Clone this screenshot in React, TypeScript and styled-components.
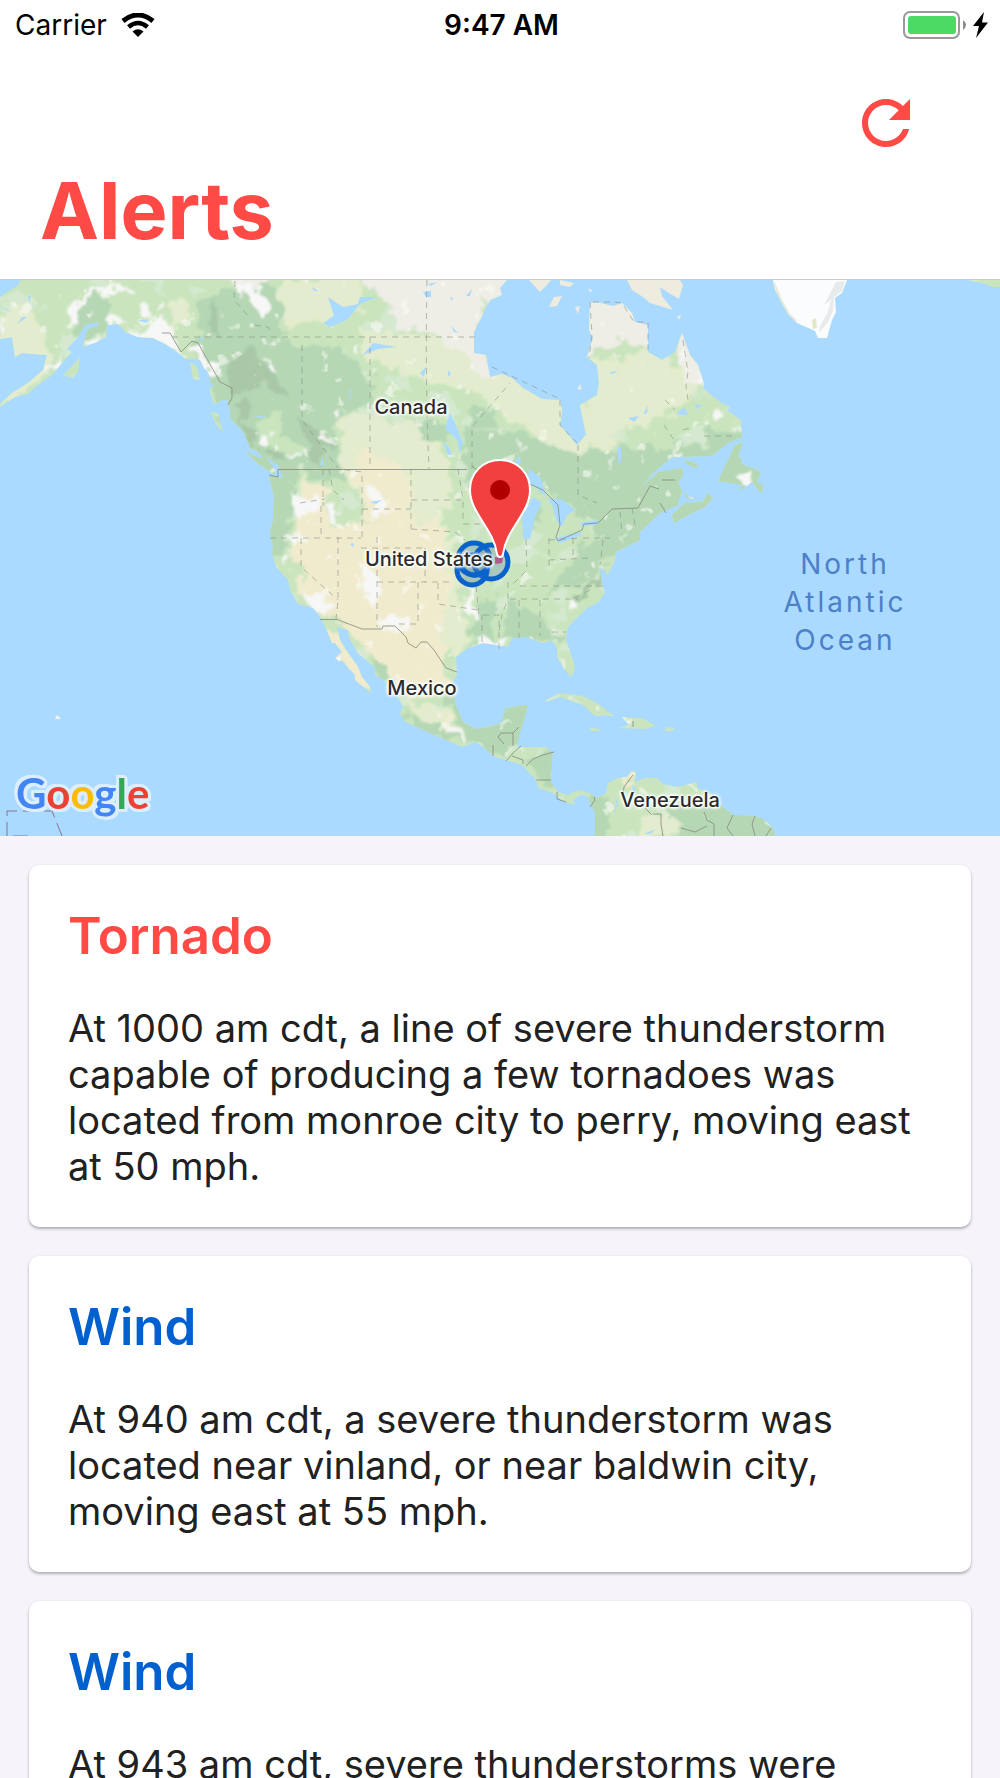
import React from "react";
import styled, { createGlobalStyle } from "styled-components";

const red = "#ff4a45";
const blue = "#0060cf";
const water = "#aadaff";

const GlobalStyle = createGlobalStyle`
  *, *::before, *::after { box-sizing: border-box; }
  body {
    margin: 0;
    background: #f6f4fa;
    font-family: Inter, "Liberation Sans", sans-serif;
    color: #212121;
  }
`;

const Screen = styled.div`
  display: flex;
  flex-direction: column;
  height: 100vh;
  overflow: hidden;
`;

const Header = styled.header`
  flex: none;
  background: #fff;
  border-bottom: 1px solid #c9cccf;
`;

const StatusBar = styled.div`
  display: grid;
  grid-template-columns: 1fr auto 1fr;
  align-items: center;
  height: 50px;
  padding: 0 12px 0 15px;
  color: #000;
  font-size: 28px;
  line-height: 34px;
`;

const StatusGroup = styled.div<{ $end?: boolean }>`
  display: flex;
  align-items: center;
  justify-content: ${(p) => (p.$end ? "flex-end" : "flex-start")};
  gap: ${(p) => (p.$end ? "6px" : "14px")};
`;

const Clock = styled.time`
  font-weight: 600;
`;

const Toolbar = styled.div`
  display: flex;
  justify-content: flex-end;
  height: 110px;
  padding: 37px 78px 0 0;
`;

const IconButton = styled.button`
  width: 72px;
  height: 72px;
  padding: 0;
  border: 0;
  background: none;
  color: ${red};
  cursor: pointer;

  svg { display: block; }
`;

const PageTitle = styled.h1`
  margin: 0;
  padding: 0 40px 19px;
  color: ${red};
  font-size: 79px;
  font-weight: 700;
  line-height: 100px;
`;

const MapFrame = styled.section`
  position: relative;
  flex: none;
  aspect-ratio: 1000 / 556;
  overflow: hidden;
  background: ${water};

  > svg {
    display: block;
    width: 100%;
    height: 100%;
  }
`;

const PlaceLabel = styled.span<{ $x: number; $y: number }>`
  position: absolute;
  left: ${(p) => p.$x}%;
  top: ${(p) => p.$y}%;
  transform: translate(-50%, -50%);
  color: #2b2b2b;
  font-size: 20px;
  font-weight: 500;
  line-height: 24px;
  white-space: nowrap;
  text-shadow: 0 0 3px #fff, 0 0 3px #fff, 0 0 4px #fff, 0 0 5px #fff, 1px 1px 2px #fff, -1px -1px 2px #fff;
`;

const OceanLabel = styled.span`
  position: absolute;
  left: 84.5%;
  top: 58%;
  width: min-content;
  transform: translate(-50%, -50%);
  color: #4c80c9;
  font-size: 28px;
  letter-spacing: 3px;
  line-height: 38px;
  text-align: center;
`;

const Wordmark = styled.span`
  position: absolute;
  left: 16px;
  bottom: 18px;
  font-family: Lato, sans-serif;
  font-size: 42px;
  font-weight: 700;
  line-height: 50px;
  filter: drop-shadow(2px 0 0 #dceefc) drop-shadow(-2px 0 0 #dceefc)
    drop-shadow(0 2px 0 #dceefc) drop-shadow(0 -2px 0 #dceefc)
    drop-shadow(1px 1px 0 #dceefc) drop-shadow(-1px -1px 0 #dceefc);
`;

const Letter = styled.span<{ $color: string }>`
  color: ${(p) => p.$color};
`;

const AlertList = styled.main`
  flex: 1;
  min-height: 0;
  display: flex;
  flex-direction: column;
  gap: 29px;
  padding: 29px;
  overflow-y: auto;
  scrollbar-width: none;
`;

const Card = styled.article`
  flex: none;
  padding: 40px 39px 38px;
  border-radius: 10px;
  background: #fff;
  box-shadow: 0 2px 3px rgba(0, 0, 0, 0.28), 0 0 2px rgba(0, 0, 0, 0.08);
`;

const CardTitle = styled.h2<{ $color: string }>`
  margin: 0 0 38px;
  color: ${(p) => p.$color};
  font-size: 51px;
  font-weight: 600;
  line-height: 62px;
`;

const CardText = styled.p`
  margin: 0;
  font-size: 38px;
  line-height: 46px;
`;

const WifiIcon = () => (
  <svg width="34" height="24" viewBox="0 0 34 24" aria-label="Wi-Fi">
    <path d="M2 8Q17-4 32 8" fill="none" stroke="#000" strokeWidth="5" />
    <path d="M7.500 14Q17 6 26.500 14" fill="none" stroke="#000" strokeWidth="4.500" />
    <path d="M11.500 18.500Q17 14 22.500 18.500L17 24Z" />
  </svg>
);

const BatteryIcon = () => (
  <svg width="64" height="28" viewBox="0 0 64 28" aria-label="Battery charging">
    <rect x="1" y="1" width="55" height="26" rx="6" fill="#fff" stroke="#999" strokeWidth="2" />
    <rect x="5" y="5" width="48" height="18" rx="3" fill="#4cd964" />
    <path d="M60 9Q66 14 60 19Z" fill="#8c8c8c" />
  </svg>
);

const BoltIcon = () => (
  <svg width="15" height="26" viewBox="0 0 15 26" aria-hidden="true">
    <path d="M11 0L0 14H6L3 26L15 10.500H9Z" />
  </svg>
);

const RefreshIcon = () => (
  <svg width="72" height="72" viewBox="0 0 24 24" fill="currentColor" aria-hidden="true">
    <path d="M17.65 6.35C16.2 4.9 14.21 4 12 4c-4.42 0-7.99 3.58-7.99 8s3.57 8 7.99 8c3.73 0 6.84-2.55 7.73-6h-2.08c-.82 2.33-3.04 4-5.65 4-3.31 0-6-2.69-6-6s2.69-6 6-6c1.66 0 3.14.69 4.22 1.78L13 11h7V4l-2.35 2.35z" />
  </svg>
);

const mainland =
  "21,280 507,280 500,288 502,295 490,300 474,332 474,353 486,355 490,377 502,374 512,378 523,388 542,399 560,400 562,410 560,425 577,445 586,435 580,405 597,395 599,383 597,365 587,357 593,338 589,330 590,303 596,302 613,306 622,303 632,313 635,322 648,325 648,352 662,360 675,352 682,333 690,355 698,365 704,384 703,388 720,402 730,407 727,410 741,420 742,437 728,443 712,456 672,457 653,473 640,488 658,472 682,468 683,475 678,483 682,490 678,505 660,513 640,532 640,540 616,552 615,560 608,575 600,567 602,585 605,592 599,602 587,608 568,627 566,640 573,660 575,667 572,677 566,672 557,657 557,648 552,641 542,643 527,637 512,638 508,647 483,643 468,648 456,657 457,675 453,682 454,693 455,703 463,722 476,729 487,727 502,723 505,709 517,706 528,705 525,717 520,733 517,747 545,747 553,753 552,760 551,782 558,792 568,795 578,790 590,793 597,798 606,793 608,783 617,778 627,777 632,771 636,773 635,782 645,778 657,778 663,784 677,787 697,782 697,788 710,793 723,807 733,815 755,816 763,819 773,828 775,836 595,836 595,812 592,807 587,796 580,795 573,800 575,805 563,801 553,793 538,788 536,780 522,765 495,757 483,747 476,742 462,747 430,733 405,722 400,713 403,707 398,697 387,682 375,675 375,668 358,653 349,638 348,630 337,627 340,640 348,653 358,667 362,677 370,687 371,693 355,680 355,675 343,662 336,657 342,652 335,643 332,643 328,633 320,617 313,608 298,604 290,590 288,580 276,567 272,553 273,547 270,532 273,520 274,497 269,475 283,478 278,465 264,458 256,450 250,448 248,442 242,430 230,418 230,410 227,400 217,400 212,385 205,370 200,360 186,359 177,352 167,345 153,338 138,337 125,332 118,324 107,325 106,337 97,342 83,347 84,342 87,330 100,324 97,322 85,325 78,337 67,349 72,352 63,362 52,375 38,385 28,394 15,397 0,407 0,404 12,393 28,383 43,370 47,355 22,353 15,357 12,337 0,339 0,297 18,285";

const islands = [
  "743,442 735,445 728,460 718,481 742,485 740,491 752,482 761,493 764,486 757,482 761,472 740,463 743,459 738,457",
  "672,515 674,523 692,513 705,507 713,498 707,493 703,502 685,503",
  "683,460 692,462 699,466 696,468 689,465",
  "683,492 690,497 697,497 695,499 687,498",
  "546,700 560,693 583,696 597,703 614,716 595,716 583,705 560,697 546,702",
  "622,717 642,718 656,726 645,729 619,728 629,725",
  "589,728 597,728 601,731 592,731",
  "665,727 675,728 672,731 665,731",
  "80,357 70,368 63,375 72,378 78,372",
  "211,412 219,414 220,422 224,433 215,423",
  "190,362 197,366 200,380 193,379",
  "209,388 215,387 222,400 214,405",
  "245,451 257,457 267,458 278,470 273,474 257,463",
  "968,280 1000,280 1000,287 993,287 985,284",
];

const arctic = [
  "627,280 680,280 683,285 679,299 672,295 660,287 662,296 673,310 650,303 643,297 632,290",
  "529,280 551,280 547,285 540,292",
  "560,280 574,283 570,287 560,285",
  "549,307 554,297 562,296 557,306",
  "575,307 580,306 578,314",
  "588,288 592,290 591,293",
  "577,389 581,384 581,390",
  "677,316 681,315 679,320",
];

const lakes = [
  "529,469 540,477 544,488 546,497 536,487 528,484",
  "515,460 520,457 521,463 517,466",
  "533,497 542,503 535,517 530,539 523,539 522,517",
  "547,498 563,500 575,510 567,515 562,527 556,520 552,505",
  "555,538 580,532 582,535 560,543",
  "582,522 598,520 597,525 580,526",
  "450,413 455,423 463,443 460,453 457,440 445,428",
  "443,442 449,447 452,455 448,455",
  "328,297 343,307 358,304 360,297 377,297 360,304 347,320 330,327 323,323 334,316",
  "363,355 373,343 397,347 378,349",
  "420,373 426,367 424,377",
  "448,370 451,374 448,377",
  "350,390 352,389 349,402",
  "466,296 472,289 470,296",
  "451,326 458,333 454,332",
  "423,292 431,291 431,297 426,297",
  "428,284 437,282 431,286",
  "450,297 453,298 452,301",
  "609,373 618,370 613,374",
  "628,418 639,416 634,422",
  "643,414 648,406 647,413",
  "618,447 621,446 621,463 618,460",
  "676,414 684,407 688,415",
  "695,404 702,406 696,409",
  "266,457 276,464 283,478 278,474 272,465",
  "253,416 266,416 262,418",
  "0,306 14,313 4,309",
  "17,324 22,317 27,317",
  "28,296 31,296 29,304",
  "138,320 149,320 145,323",
  "312,287 319,291 314,291",
  "320,465 322,458 324,465",
  "370,502 382,500 376,504",
  "350,544 353,543 354,548",
  "200,338 204,337 202,342",
  "201,366 207,371 211,379 206,377",
  "210,386 216,383 208,390",
  "632,784 636,789 634,793",
  "614,815 617,798 618,803",
  "644,834 656,829 650,834",
];

const zones: { fill: string; areas: string[] }[] = [
  {
    fill: "#e3ecce",
    areas: [
      "0,315 30,300 45,345 50,375 20,395 0,407",
      "282,280 360,280 365,310 330,318 300,330 282,320",
      "170,300 186,300 188,322 175,328",
      "360,330 480,340 520,378 590,410 620,445 560,450 520,425 480,395 440,383 400,372 365,360",
      "590,360 650,352 690,370 700,395 650,425 600,435 585,410",
      "340,412 395,418 430,425 450,465 458,560 460,650 430,650 410,560 340,470",
      "435,600 465,600 470,645 455,660 440,640",
      "400,700 450,710 460,735 430,725",
      "640,820 700,805 715,836 640,836",
    ],
  },
  {
    fill: "#eeede6",
    areas: [
      "345,270 520,270 505,300 480,300 485,360 504,382 478,374 462,348 440,338 415,328 395,330 380,295",
      "440,310 470,305 470,330 445,330",
      "575,290 650,300 665,358 625,342 600,350 580,362",
      "682,320 712,386 682,382 678,350",
      "232,270 268,270 270,318 255,320 240,300",
    ],
  },
  {
    fill: "#f1ebce",
    areas: [
      "305,472 325,490 330,530 360,520 410,530 410,470 370,450 360,448 350,475 365,500 345,550 300,555 292,530",
      "292,530 440,520 455,590 440,620 445,670 455,690 410,700 380,665 350,630 318,610 290,580",
      "327,630 340,630 385,700 360,690 330,650",
      "440,715 450,718 455,730 445,725",
      "620,775 635,773 628,790",
    ],
  },
  {
    fill: "#b5d7b4",
    areas: [
      "200,300 225,290 280,285 284,335 330,345 368,372 375,405 345,412 330,435 345,478 325,480 305,468 285,465 230,470 215,395 195,365 196,335",
      "255,462 300,465 292,500 283,560 258,545",
      "80,300 105,295 108,330 78,342",
      "465,430 520,432 560,450 640,448 745,440 720,495 660,525 620,530 570,510 530,480 480,500 465,480",
      "415,420 440,418 448,440 425,440",
      "470,405 490,410 500,425 470,430",
      "600,520 640,510 650,540 610,555 590,580 550,595 540,600 575,560",
      "470,630 482,600 495,598 490,640 475,645",
      "500,640 515,600 540,620 565,640 530,640",
      "515,515 530,500 545,520 530,530",
      "370,650 385,665 400,690 380,680",
      "440,690 455,690 470,720 500,722 500,700 540,695 530,745 500,752 470,740",
      "402,712 440,725 470,740 430,740",
      "530,755 555,750 552,785 535,775",
      "590,800 610,795 605,840 585,840",
      "660,800 790,810 785,845 690,845",
      "705,430 780,430 780,510 705,488",
      "660,490 730,480 700,525 670,535",
      "545,760 560,780 545,790",
    ],
  },
  {
    fill: "#a9c8a8",
    areas: [
      "225,370 248,345 290,395 262,385 250,395 230,385",
      "235,400 247,398 245,425 262,455 245,445",
      "302,420 315,430 335,445 322,450 318,470 310,462",
      "268,450 285,448 280,465",
      "213,300 222,310 218,335 206,328",
      "570,600 610,565 600,585 575,605",
    ],
  },
  {
    fill: "#cae5be",
    areas: [
      "256,422 275,412 285,435 300,450 285,452 262,440",
      "283,325 330,320 340,338 300,350",
      "440,505 470,500 472,540 450,540",
      "278,567 300,575 308,582 300,560 280,545",
    ],
  },
  {
    fill: "#f6f7f6",
    areas: [
      "66,305 85,297 110,284 138,290 132,292 108,290 84,303 80,325 66,330",
      "105,322 118,312 126,320 108,328",
      "135,308 145,303 155,312 140,316",
      "125,327 150,332 150,317 175,325 178,345 188,360 170,350 140,338",
      "190,345 205,350 218,375 210,372 198,358",
      "85,340 105,335 98,343 84,347",
      "45,368 65,356 60,365 48,377",
      "0,320 6,322 5,334 0,335",
      "235,281 250,282 268,305 262,315 246,300",
      "258,434 266,436 264,446 258,443",
      "273,431 278,435 275,442",
      "292,500 300,484 298,495 322,500 320,508 300,520 292,515",
      "288,452 302,450 298,456 288,455",
      "264,355 276,368 280,374 270,370",
      "318,428 328,438 333,445 322,440",
      "330,503 340,510 338,525 330,520",
      "285,540 300,530 296,545",
      "282,555 288,552 290,565 284,562",
      "308,590 320,598 335,605 330,612 305,604",
      "370,485 385,500 390,512 372,515",
      "365,560 378,580 375,612 366,600",
      "380,620 412,618 410,630 385,628",
      "464,580 472,590 480,620 472,618 468,605",
      "476,640 510,640 505,650 480,648",
      "448,718 462,732 466,742 455,735",
      "476,740 490,752 482,749",
      "568,598 578,598 580,608 572,610",
      "557,655 565,665 563,672",
      "600,565 607,572 604,575",
      "697,370 703,384 696,384",
      "682,345 688,358 680,357",
      "712,412 725,410 722,418 714,418",
      "732,422 741,426 741,434",
      "672,449 680,449 680,453 672,453",
      "736,478 751,475 750,484 738,484",
      "620,718 628,718 626,726",
      "610,460 616,456 612,468",
      "520,440 525,444 520,447",
      "495,430 502,430 500,434",
      "333,412 340,409 338,420",
      "605,290 640,295 640,299",
      "520,748 523,758 517,754",
    ],
  },
];

const stateLines =
  "M172 337H475M370 337V469M427 280Q425 380 429 469M302 345V420L338 468M235 281L234 300 250 318M255 325L268 327 272 333" +
  "M475 280M472 469V427L510 383M492 367L560 399M578 445V495L597 503M704 436H735M683 340L688 372 686 386 688 400M665 400L675 410M664 425L674 440M683 430L690 428" +
  "M323 469L323 506M300 503L325 499M321 506V537M270 538H361M362 537V472L340 469M362 509H411M411 469V529M329 469L333 490 344 500M411 500H462M411 529L455 532 465 540M458 469L463 500 463 520M463 524H500" +
  "M301 538V567L338 600M338 537V600L336 619M377 537V627M361 548H425M377 582H450M418 582V624H395M438 583V604L478 610M425 548V582M476 586L479 615H499V650M482 642V615M508 582L508 598 502 615 498 636M519 600V638M540 600V636M510 599H578M520 586H605" +
  "M526 539L527 570 512 585M549 538V570M549 540L582 538M573 538V560M549 560L590 558M583 538H610M620 512L622 535M632 508L636 530M590 590L570 600M603 540L600 565M552 632H566" +
  "M590 302L592 335 589 358M593 302H613L622 303 634 322H648V350M560 400V425L577 443";

const reefLines = "M7 837V811H52L62 836M13 836H29";

const countryLines =
  "M162 333H170L181 352 192 341 198 343 220 382 232 388V398L228 405M269 475L278 477V469.500H467M472 466L484 475M530 484L543 490 558 505 560 525 556 537 558 541 582 530 584 524 598 523 612 509 638 508 650 486 659 489M660 503L666 513" +
  "M320 619.500H337L362 629H382L383 626H395L406 637 408 643 416 648 421 642H427L434 650 446 668 457 672" +
  "M493 745V756M519 727L513 733H501L498 737 504 744M513 733V746M506 761L514 752 521 746M512 756L523 760V764M526 766L533 759 543 755 554 752M536 780H551M557 792V799L566 802M594 797L595 800 590 807M633 775L624 787 622 798M645 808L652 815M653 814H661V824L663 836M704 812L707 820 714 824V836M681 828L695 832 707 826M733 815L727 828 733 836M755 816L752 824 755 836M771 828L766 836M633 721V727M675 480L662 480";

const MapArt = () => (
  <svg viewBox="0 280 1000 556" preserveAspectRatio="xMidYMid slice" aria-hidden="true">
    <defs>
      <clipPath id="land">
        <polygon points={mainland} />
        {islands.map((p) => (
          <polygon key={p} points={p} />
        ))}
      </clipPath>
      <filter id="rough" x="0" y="270" width="1000" height="576" filterUnits="userSpaceOnUse">
        <feTurbulence type="fractalNoise" baseFrequency="0.07" numOctaves="3" seed="8" />
        <feDisplacementMap in="SourceGraphic" scale="22" xChannelSelector="R" yChannelSelector="G" />
        <feGaussianBlur stdDeviation="0.9" />
      </filter>
      <filter id="patches" x="0" y="280" width="1000" height="556" filterUnits="userSpaceOnUse">
        <feTurbulence type="fractalNoise" baseFrequency="0.06" numOctaves="3" seed="21" />
        <feColorMatrix values="0 0 0 0 0.95  0 0 0 0 0.96  0 0 0 0 0.91  10 0 0 0 -6.9" />
      </filter>
      <filter id="woods" x="0" y="280" width="1000" height="556" filterUnits="userSpaceOnUse">
        <feTurbulence type="fractalNoise" baseFrequency="0.035" numOctaves="3" seed="4" />
        <feColorMatrix values="0 0 0 0 0.71  0 0 0 0 0.84  0 0 0 0 0.70  0 12 0 0 -7" />
      </filter>
    </defs>

    <rect y="280" width="1000" height="556" fill={water} />
    <g clipPath="url(#land)">
      <rect y="280" width="1000" height="556" fill="#cae5be" />
      <rect y="280" width="1000" height="556" filter="url(#woods)" opacity="0.6" />
      <g filter="url(#rough)">
        {zones.map((zone) => (
          <g key={zone.fill} fill={zone.fill}>
            {zone.areas.map((p) => (
              <polygon key={p} points={p} />
            ))}
          </g>
        ))}
      </g>
      <rect y="280" width="1000" height="556" filter="url(#patches)" opacity="0.6" />
    </g>
    <g fill="#eeebdf">
      {arctic.map((p) => (
        <polygon key={p} points={p} />
      ))}
    </g>
    <polygon
      fill="#fafcfd"
      points="773,280 775,290 788,313 797,323 815,331 818,338 827,338 832,320 836,312 835,298 842,293 847,280"
    />
    <path d="M774 283L781 300 789 314 796 321" fill="none" stroke="#e6ead8" strokeWidth="2" />
    <path d="M836 282L824 305 831 300 827 314 820 326 819 333 828 322 833 311 834 297 842 291 845 281Z" fill="#e8ebec" />
    <path d="M812 320L816 318 817 328 813 329Z" fill="#e3e8c8" />
    <path d="M335 658L341 656 340 662ZM55 719L57 715 61 719Z" fill="#f4f5f3" />
    <g fill={water}>
      {lakes.map((p) => (
        <polygon key={p} points={p} />
      ))}
    </g>
    <path d={stateLines} fill="none" stroke="#8c9087" strokeOpacity="0.6" strokeWidth="1" strokeDasharray="6 5" />
    <path d={reefLines} fill="none" stroke="#8a7488" strokeWidth="1" strokeDasharray="15 6" />
    <path d={countryLines} fill="none" stroke="#858a80" strokeOpacity="0.8" strokeWidth="1" />

    <g fill="rgba(80,125,165,0.3)" stroke="#0a62cc" strokeWidth="5">
      <circle cx="474" cy="559" r="16" />
      <circle cx="491" cy="562" r="17" />
      <circle cx="472" cy="570" r="15" />
      <path d="M461 567Q474 583 488 568" fill="none" />
    </g>
    <path d="M495 557L503 558 502 563 495 564Z" fill="#b05a8c" />
    <path
      d="M500 460C483 460 470 473 470 490C470 513 494 529 497 554C498 558 502 558 503 554C506 529 530 513 530 490C530 473 517 460 500 460Z"
      fill="#f23f40"
      stroke="#fff"
      strokeWidth="2"
    />
    <circle cx="500" cy="490" r="10" fill="#b10000" />
  </svg>
);

const places = [
  { name: "Canada", x: 41.1, y: 22.9 },
  { name: "United States", x: 42.9, y: 50.1 },
  { name: "Mexico", x: 42.2, y: 73.3 },
  { name: "Venezuela", x: 67, y: 93.6 },
];

const wordmark = [
  ["G", "#4285f4"],
  ["o", "#ea4335"],
  ["o", "#fbbc05"],
  ["g", "#4285f4"],
  ["l", "#34a853"],
  ["e", "#ea4335"],
];

const alerts = [
  {
    title: "Tornado",
    color: red,
    text: "At 1000 am cdt, a line of severe thunderstorm capable of producing a few tornadoes was located from monroe city to perry, moving east at 50 mph.",
  },
  {
    title: "Wind",
    color: blue,
    text: "At 940 am cdt, a severe thunderstorm was located near vinland, or near baldwin city, moving east at 55 mph.",
  },
  {
    title: "Wind",
    color: blue,
    text: "At 943 am cdt, severe thunderstorms were",
  },
];

export default function App() {
  return (
    <Screen>
      <GlobalStyle />
      <Header>
        <StatusBar>
          <StatusGroup>
            <span>Carrier</span>
            <WifiIcon />
          </StatusGroup>
          <Clock>9:47 AM</Clock>
          <StatusGroup $end>
            <BatteryIcon />
            <BoltIcon />
          </StatusGroup>
        </StatusBar>
        <Toolbar>
          <IconButton type="button" aria-label="Refresh">
            <RefreshIcon />
          </IconButton>
        </Toolbar>
        <PageTitle>Alerts</PageTitle>
      </Header>

      <MapFrame aria-label="Map">
        <MapArt />
        {places.map((p) => (
          <PlaceLabel key={p.name} $x={p.x} $y={p.y}>
            {p.name}
          </PlaceLabel>
        ))}
        <OceanLabel>North Atlantic Ocean</OceanLabel>
        <Wordmark>
          {wordmark.map(([char, color], i) => (
            <Letter key={i} $color={color}>
              {char}
            </Letter>
          ))}
        </Wordmark>
      </MapFrame>

      <AlertList>
        {alerts.map((a, i) => (
          <Card key={i}>
            <CardTitle $color={a.color}>{a.title}</CardTitle>
            <CardText>{a.text}</CardText>
          </Card>
        ))}
      </AlertList>
    </Screen>
  );
}
